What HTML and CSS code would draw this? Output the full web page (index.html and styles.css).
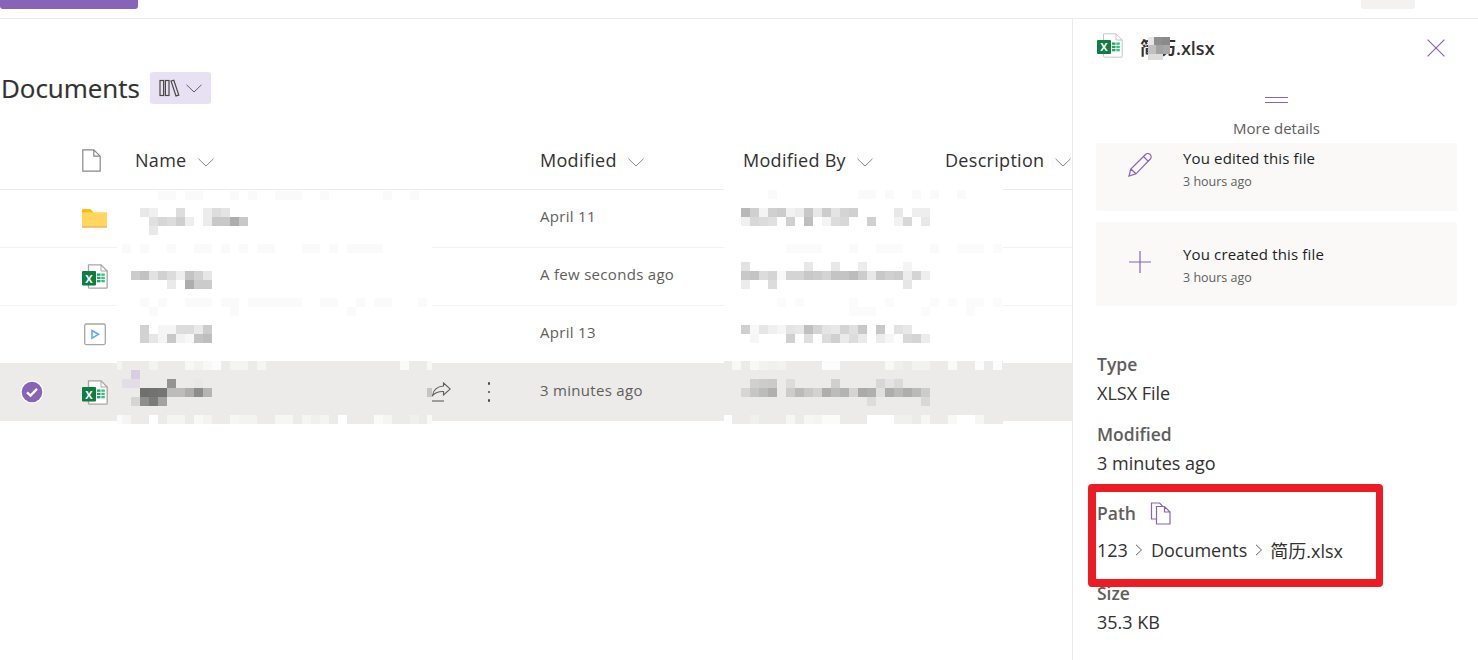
FILE: index.html
```html
<!DOCTYPE html>
<html lang="en">
<head>
  <meta charset="UTF-8">
  <title>Documents</title>
  <link rel="stylesheet" href="styles.css">
</head>
<body>
  <div class="topbar">
    <div class="new-btn"></div>
    <div class="top-pill"></div>
  </div>

  <div class="workspace">
    <main class="library">
      <div class="title-row">
        <h1>Documents</h1>
        <div class="view-chip">
          <svg width="21" height="18" viewBox="0 0 21 18" fill="none" stroke="#4a4846" stroke-width="1.2"><rect x="1" y="1.5" width="3.6" height="15"/><rect x="6.4" y="1.5" width="3.6" height="15"/><path d="M12 2l2.8-.8 5 14.8-2.8.9z"/></svg>
          <svg width="16" height="9" viewBox="0 0 16 9" fill="none" stroke="#605e5c"><path d="M.5.8L8 8l7.5-7.2"/></svg>
        </div>
      </div>

      <div class="table">
        <div class="row head">
          <div></div>
          <div class="cell-icon">
            <svg width="19" height="23" viewBox="0 0 19 23" fill="none" stroke="#8a8886" stroke-width="1.2"><path d="M.8.8h11l6.400 6.400v15h-17.400zM11.800 .8v6.400h6.400"/></svg>
          </div>
          <div class="col-title">Name <svg class="chev" width="16" height="9" viewBox="0 0 16 9" fill="none" stroke="#8a8886"><path d="M.5.8L8 8l7.5-7.2"/></svg></div>
          <div class="col-title">Modified <svg class="chev" width="16" height="9" viewBox="0 0 16 9" fill="none" stroke="#8a8886"><path d="M.5.8L8 8l7.5-7.2"/></svg></div>
          <div class="col-title">Modified By <svg class="chev" width="16" height="9" viewBox="0 0 16 9" fill="none" stroke="#8a8886"><path d="M.5.8L8 8l7.5-7.2"/></svg></div>
          <div class="col-title">Description <svg class="chev" width="16" height="9" viewBox="0 0 16 9" fill="none" stroke="#8a8886"><path d="M.5.8L8 8l7.5-7.2"/></svg></div>
        </div>

        <div class="row">
          <div></div>
          <div class="cell-icon">
            <svg class="folder" width="25" height="20" viewBox="0 0 26 20"><path d="M0 2a1 1 0 0 1 1-1h8l3 3h13a1 1 0 0 1 1 1v14H0z" fill="#ffd75e"/><path d="M0 2a1 1 0 0 1 1-1h7.5l3 3H0z" fill="#ffb900"/><rect y="18.800" width="26" height="1.200" fill="#e8a33d"/></svg>
          </div>
          <div></div>
          <div class="date">April 11</div>
          <div></div><div></div>
        </div>

        <div class="row">
          <div></div>
          <div class="cell-icon">
            <svg width="26" height="25" viewBox="0 0 26 25"><path d="M6.500 .8h12.500l6.200 6.200v16.200a1 1 0 0 1-1 1h-16.700a1 1 0 0 1-1-1z" fill="#fff" stroke="#a8a6a4" stroke-width="1.3"/><path d="M19 .8v6.200h6.200" fill="none" stroke="#a8a6a4"/><rect x="15" y="9.500" width="3.500" height="2.300" fill="#21a366"/><rect x="19.300" y="9.500" width="3.500" height="2.300" fill="#33c481"/><rect x="15" y="12.800" width="3.500" height="2.300" fill="#21a366"/><rect x="19.300" y="12.800" width="3.500" height="2.300" fill="#33c481"/><rect x="15" y="16" width="3.500" height="2.300" fill="#21a366"/><rect x="19.300" y="16" width="3.500" height="2.300" fill="#33c481"/><rect y="7" width="14" height="14.500" rx="1" fill="#107c41"/><text class="xl" x="7" y="18.500">X</text></svg>
          </div>
          <div></div>
          <div class="date">A few seconds ago</div>
          <div></div><div></div>
        </div>

        <div class="row">
          <div></div>
          <div class="cell-icon">
            <svg width="26" height="23" viewBox="0 0 26 23" fill="none"><rect x="2.700" y="1" width="20.600" height="20.600" rx="1.500" stroke="#a8a6a4" stroke-width="1.3"/><path d="M10 7.500l6.500 3.800-6.500 3.800z" stroke="#5aa9f0" stroke-width="1.5"/></svg>
          </div>
          <div></div>
          <div class="date">April 13</div>
          <div></div><div></div>
        </div>

        <div class="row is-selected">
          <div class="cell-check">
            <svg width="24" height="24" viewBox="0 0 24 24"><circle cx="12" cy="12" r="11.500" fill="#fff"/><circle cx="12" cy="12" r="10.300" fill="#8764b8"/><path d="M7 12.300l3.500 3.300 6.500-6.800" fill="none" stroke="#fff" stroke-width="2.4"/></svg>
          </div>
          <div class="cell-icon">
            <svg width="26" height="25" viewBox="0 0 26 25"><path d="M6.500 .8h12.500l6.200 6.200v16.200a1 1 0 0 1-1 1h-16.700a1 1 0 0 1-1-1z" fill="#fff" stroke="#a8a6a4" stroke-width="1.3"/><path d="M19 .8v6.200h6.200" fill="none" stroke="#a8a6a4"/><rect x="15" y="9.500" width="3.500" height="2.300" fill="#21a366"/><rect x="19.300" y="9.500" width="3.500" height="2.300" fill="#33c481"/><rect x="15" y="12.800" width="3.500" height="2.300" fill="#21a366"/><rect x="19.300" y="12.800" width="3.500" height="2.300" fill="#33c481"/><rect x="15" y="16" width="3.500" height="2.300" fill="#21a366"/><rect x="19.300" y="16" width="3.500" height="2.300" fill="#33c481"/><rect y="7" width="14" height="14.500" rx="1" fill="#107c41"/><text class="xl" x="7" y="18.500">X</text></svg>
          </div>
          <div class="name-actions">
            <svg width="21" height="20" viewBox="0 0 21 20" fill="none" stroke="#605e5c" stroke-width="1.1"><path d="M13.500 1l6.800 6-6.800 6v-3.500c-4.500-.2-8 .8-11 4 .8-5.500 5-9 11-9.500z"/><path d="M1 19h13"/></svg>
            <div class="dots"><span></span><span></span><span></span></div>
          </div>
          <div class="date">3 minutes ago</div>
          <div></div><div></div>
        </div>

        <!-- pixelated names -->
        <svg class="mosaic mosaic-name" width="315" height="234" viewBox="117 190 315 234">
          <rect x="117" y="247" width="315" height="1" fill="#fff"/>
          <rect x="117" y="305" width="315" height="1" fill="#fff"/>
          <rect x="117" y="361" width="315" height="63" fill="#ecebe9"/>
          <g class="cells">
            <rect x="158" y="191" fill="#fafafa"/><rect x="167" y="191" fill="#fafafa"/><rect x="185" y="191" fill="#fafafa"/><rect x="194" y="191" fill="#fafafa"/><rect x="230" y="191" fill="#fafafa"/><rect x="248" y="191" fill="#fafafa"/><rect x="275" y="191" fill="#fafafa"/><rect x="284" y="191" fill="#fafafa"/><rect x="293" y="191" fill="#fafafa"/><rect x="320" y="191" fill="#fafafa"/><rect x="383" y="191" fill="#fafafa"/><rect x="410" y="191" fill="#fafafa"/>
            <rect x="140" y="208" fill="#e8e8e8"/><rect x="149" y="208" fill="#f0f0f0"/><rect x="176" y="208" fill="#dddddd"/><rect x="203" y="208" fill="#ececec"/><rect x="212" y="208" fill="#dddddd"/><rect x="221" y="208" fill="#e4e4e4"/>
            <rect x="149" y="217" fill="#e0e0e0"/><rect x="158" y="217" fill="#d8d6d6"/><rect x="167" y="217" fill="#dcdcdc"/><rect x="176" y="217" fill="#cfcfcf"/><rect x="185" y="217" fill="#eeeeee"/><rect x="203" y="217" fill="#ececec"/><rect x="212" y="217" fill="#c8c8c8"/><rect x="221" y="217" fill="#c8c8c8"/><rect x="230" y="217" fill="#adadad"/><rect x="239" y="217" fill="#c8c8c8"/>
            <rect x="149" y="226" fill="#e8e8e8"/>
            <rect x="122" y="244" fill="#fafafa"/><rect x="140" y="244" fill="#fafafa"/><rect x="167" y="244" fill="#fafafa"/><rect x="194" y="244" fill="#fafafa"/><rect x="203" y="244" fill="#fafafa"/><rect x="221" y="244" fill="#fafafa"/><rect x="239" y="244" fill="#fafafa"/><rect x="257" y="244" fill="#fafafa"/><rect x="266" y="244" fill="#fafafa"/><rect x="302" y="244" fill="#fafafa"/><rect x="311" y="244" fill="#fafafa"/><rect x="329" y="244" fill="#fafafa"/><rect x="347" y="244" fill="#fafafa"/><rect x="356" y="244" fill="#fafafa"/><rect x="365" y="244" fill="#fafafa"/><rect x="374" y="244" fill="#fafafa"/>
            <rect x="131" y="271" fill="#cccccc"/><rect x="140" y="271" fill="#c2c2c0"/><rect x="149" y="271" fill="#e2e2e2"/><rect x="158" y="271" fill="#d2d0d0"/><rect x="167" y="271" fill="#dcdcdc"/><rect x="176" y="271" fill="#eeeeee"/><rect x="185" y="271" fill="#c4c4c4"/><rect x="194" y="271" fill="#d2d2d2"/><rect x="203" y="271" fill="#e6e6e4"/>
            <rect x="167" y="280" fill="#eaeaea"/><rect x="185" y="280" fill="#adadab"/><rect x="194" y="280" fill="#cbcbcb"/><rect x="203" y="280" fill="#cbcbcb"/>
            <rect x="140" y="298" fill="#fafafa"/><rect x="158" y="298" fill="#fafafa"/><rect x="185" y="298" fill="#fafafa"/><rect x="194" y="298" fill="#fafafa"/><rect x="203" y="298" fill="#fafafa"/><rect x="221" y="298" fill="#fafafa"/><rect x="230" y="298" fill="#fafafa"/><rect x="248" y="298" fill="#fafafa"/><rect x="257" y="298" fill="#fafafa"/><rect x="266" y="298" fill="#fafafa"/><rect x="275" y="298" fill="#fafafa"/><rect x="284" y="298" fill="#fafafa"/><rect x="293" y="298" fill="#fafafa"/><rect x="320" y="298" fill="#fafafa"/><rect x="329" y="298" fill="#fafafa"/><rect x="356" y="298" fill="#fafafa"/><rect x="374" y="298" fill="#fafafa"/><rect x="383" y="298" fill="#fafafa"/><rect x="418" y="298" fill="#fafafa"/>
            <rect x="149" y="307" fill="#fafafa"/><rect x="230" y="307" fill="#fafafa"/><rect x="347" y="307" fill="#fafafa"/>
            <rect x="140" y="325" fill="#d2d2d2"/><rect x="158" y="325" fill="#f5f5f5"/><rect x="167" y="325" fill="#f5f5f5"/><rect x="176" y="325" fill="#dcdcdc"/><rect x="185" y="325" fill="#dcdcdc"/><rect x="194" y="325" fill="#eaeaea"/><rect x="203" y="325" fill="#cccccc"/>
            <rect x="140" y="334" fill="#d2d2d2"/><rect x="149" y="334" fill="#e6e6e6"/><rect x="158" y="334" fill="#f4f4f4"/><rect x="167" y="334" fill="#c8c8c8"/><rect x="176" y="334" fill="#f2f2f2"/><rect x="185" y="334" fill="#f8f8f8"/><rect x="194" y="334" fill="#c4c4c4"/><rect x="203" y="334" fill="#bebebe"/>
            <rect x="149" y="361" fill="#f3f3f2"/><rect x="185" y="361" fill="#f7f7f6"/><rect x="194" y="361" fill="#f2f2f1"/><rect x="203" y="361" fill="#f8f8f7"/><rect x="212" y="361" fill="#fcfcfc"/><rect x="230" y="361" fill="#f4f4f3"/><rect x="239" y="361" fill="#f4f4f3"/><rect x="257" y="361" fill="#f5f5f4"/><rect x="400" y="361" fill="#fafaf9"/>
            <rect x="131" y="370" fill="#d8cde2"/>
            <rect x="122" y="379" fill="#e2dde6"/><rect x="131" y="379" fill="#e2dde6"/><rect x="167" y="379" fill="#949492"/><rect x="194" y="379" fill="#e8e8e6"/>
            <rect x="140" y="388" fill="#6f6f6d"/><rect x="149" y="388" fill="#727270"/><rect x="158" y="388" fill="#757573"/><rect x="167" y="388" fill="#bcbcba"/><rect x="176" y="388" fill="#bcbcba"/><rect x="185" y="388" fill="#adadab"/><rect x="194" y="388" fill="#8d8d8b"/><rect x="203" y="388" fill="#b5b5b3"/>
            <rect x="131" y="397" fill="#d5d5d3"/><rect x="140" y="397" fill="#8e8e8c"/><rect x="149" y="397" fill="#7b7b79"/><rect x="158" y="397" fill="#a2a2a0"/>
            <rect x="122" y="415" fill="#f5f5f4"/><rect x="149" y="415" fill="#ffffff"/><rect x="167" y="415" fill="#f4f4f3"/><rect x="176" y="415" fill="#f4f4f3"/><rect x="194" y="415" fill="#f8f8f7"/><rect x="203" y="415" fill="#f3f3f2"/><rect x="230" y="415" fill="#f6f6f5"/><rect x="239" y="415" fill="#f3f3f2"/><rect x="248" y="415" fill="#f3f3f2"/><rect x="275" y="415" fill="#f6f6f5"/><rect x="284" y="415" fill="#f6f6f5"/><rect x="302" y="415" fill="#f5f5f4"/><rect x="311" y="415" fill="#f0f0ef"/><rect x="320" y="415" fill="#f4f4f3"/><rect x="338" y="415" fill="#ffffff"/><rect x="374" y="415" fill="#fafaf9"/><rect x="383" y="415" fill="#f5f5f4"/><rect x="410" y="415" fill="#efefee"/>
          </g>
          <rect x="117" y="361" width="5" height="9" fill="#f4f4f3"/>
          <rect x="427" y="361" width="5" height="9" fill="#f7f7f6"/>
          <rect x="117" y="415" width="5" height="9" fill="#fbfbfb"/>
          <rect x="427" y="415" width="5" height="9" fill="#f9f9f8"/>
          <rect x="427" y="388" width="5" height="9" fill="#c5c5c3"/>
        </svg>

        <!-- pixelated people -->
        <svg class="mosaic mosaic-by" width="279" height="236" viewBox="724 188 279 236">
          <rect x="724" y="188" width="279" height="3" fill="#fff"/>
          <rect x="724" y="247" width="279" height="1" fill="#fff"/>
          <rect x="724" y="305" width="279" height="1" fill="#fff"/>
          <rect x="724" y="361" width="279" height="63" fill="#ecebe9"/>
          <g class="cells">
            <rect x="768" y="190" fill="#fafafa"/><rect x="858" y="190" fill="#fafafa"/><rect x="867" y="190" fill="#fafafa"/><rect x="885" y="190" fill="#fafafa"/><rect x="912" y="190" fill="#fafafa"/><rect x="930" y="190" fill="#fafafa"/><rect x="957" y="190" fill="#fafafa"/>
            <rect x="741" y="208" fill="#b8b8b8"/><rect x="750" y="208" fill="#d0d0d0"/><rect x="759" y="208" fill="#f4f4f4"/><rect x="768" y="208" fill="#d0d0d0"/><rect x="777" y="208" fill="#cccccc"/><rect x="786" y="208" fill="#f2f2f2"/><rect x="795" y="208" fill="#ececec"/><rect x="804" y="208" fill="#c8c8c8"/><rect x="813" y="208" fill="#e8e8e8"/><rect x="822" y="208" fill="#cccccc"/><rect x="831" y="208" fill="#e4e4e4"/><rect x="840" y="208" fill="#d4d4d4"/><rect x="849" y="208" fill="#d0d0d0"/><rect x="894" y="208" fill="#e8e8e8"/><rect x="912" y="208" fill="#eeeeee"/><rect x="921" y="208" fill="#eeeeee"/>
            <rect x="741" y="217" fill="#f0f0f0"/><rect x="750" y="217" fill="#d8d8d8"/><rect x="759" y="217" fill="#dcdcdc"/><rect x="768" y="217" fill="#e0e0e0"/><rect x="786" y="217" fill="#d0d0d0"/><rect x="804" y="217" fill="#bebebe"/><rect x="822" y="217" fill="#f4f4f4"/><rect x="831" y="217" fill="#dcdcdc"/><rect x="840" y="217" fill="#d8d8d8"/><rect x="867" y="217" fill="#d0d0d0"/><rect x="894" y="217" fill="#f2f2f2"/><rect x="903" y="217" fill="#d8d8d8"/><rect x="921" y="217" fill="#e8e8e8"/>
            <rect x="786" y="244" fill="#fbfbfb"/><rect x="795" y="244" fill="#fbfbfb"/><rect x="804" y="244" fill="#fbfbfb"/><rect x="813" y="244" fill="#fbfbfb"/><rect x="849" y="244" fill="#fafafa"/><rect x="876" y="244" fill="#fbfbfb"/><rect x="885" y="244" fill="#fbfbfb"/><rect x="894" y="244" fill="#fbfbfb"/><rect x="930" y="244" fill="#fafafa"/><rect x="957" y="244" fill="#fbfbfb"/><rect x="966" y="244" fill="#fbfbfb"/><rect x="975" y="244" fill="#fbfbfb"/><rect x="993" y="244" fill="#fbfbfb"/>
            <rect x="741" y="262" fill="#e2e2e2"/><rect x="804" y="262" fill="#e8e8e8"/><rect x="831" y="262" fill="#e8e8e8"/><rect x="858" y="262" fill="#ececec"/><rect x="903" y="262" fill="#f4f4f4"/>
            <rect x="741" y="271" fill="#c8c8c8"/><rect x="750" y="271" fill="#c4c4c4"/><rect x="759" y="271" fill="#dcdcdc"/><rect x="768" y="271" fill="#d4d4d4"/><rect x="777" y="271" fill="#f8f8f8"/><rect x="786" y="271" fill="#d4d4d4"/><rect x="795" y="271" fill="#d4d4d4"/><rect x="804" y="271" fill="#c8c8c8"/><rect x="813" y="271" fill="#cccccc"/><rect x="822" y="271" fill="#d4d4d4"/><rect x="831" y="271" fill="#c4c4c4"/><rect x="840" y="271" fill="#c4c4c4"/><rect x="849" y="271" fill="#bcbcbc"/><rect x="858" y="271" fill="#cccccc"/><rect x="867" y="271" fill="#e8e8e8"/><rect x="876" y="271" fill="#c8c8c8"/><rect x="885" y="271" fill="#d0d0d0"/><rect x="894" y="271" fill="#cccccc"/><rect x="903" y="271" fill="#ececec"/><rect x="912" y="271" fill="#d4d4d4"/><rect x="921" y="271" fill="#eeeeee"/>
            <rect x="741" y="280" fill="#ececec"/><rect x="768" y="280" fill="#dcdcdc"/><rect x="903" y="280" fill="#e6e6e6"/>
            <rect x="777" y="298" fill="#fbfbfb"/><rect x="795" y="298" fill="#fbfbfb"/><rect x="849" y="298" fill="#fbfbfb"/><rect x="885" y="298" fill="#fbfbfb"/><rect x="930" y="298" fill="#fbfbfb"/><rect x="948" y="298" fill="#fbfbfb"/><rect x="966" y="298" fill="#fbfbfb"/><rect x="975" y="298" fill="#fbfbfb"/><rect x="993" y="298" fill="#fbfbfb"/>
            <rect x="849" y="307" fill="#fbfbfb"/><rect x="858" y="307" fill="#fbfbfb"/><rect x="867" y="307" fill="#fbfbfb"/><rect x="921" y="307" fill="#fbfbfb"/><rect x="966" y="307" fill="#fbfbfb"/>
            <rect x="741" y="325" fill="#d0d0d0"/><rect x="750" y="325" fill="#f8f8f8"/><rect x="759" y="325" fill="#e6e6e6"/><rect x="768" y="325" fill="#f0f0f0"/><rect x="777" y="325" fill="#f6f6f6"/><rect x="786" y="325" fill="#e4e4e4"/><rect x="795" y="325" fill="#e8e8e8"/><rect x="804" y="325" fill="#c0c0c0"/><rect x="813" y="325" fill="#d4d4d4"/><rect x="822" y="325" fill="#e4e4e4"/><rect x="831" y="325" fill="#e8e8e8"/><rect x="840" y="325" fill="#d4d4d4"/><rect x="849" y="325" fill="#e0e0e0"/><rect x="858" y="325" fill="#c8c8c8"/><rect x="876" y="325" fill="#c8c8c8"/><rect x="894" y="325" fill="#e2e2e2"/><rect x="903" y="325" fill="#e8e8e8"/>
            <rect x="750" y="334" fill="#f6f6f6"/><rect x="786" y="334" fill="#d0d0d0"/><rect x="804" y="334" fill="#e0e0e0"/><rect x="822" y="334" fill="#dcdcdc"/><rect x="831" y="334" fill="#d0d0d0"/><rect x="840" y="334" fill="#eaeaea"/><rect x="849" y="334" fill="#dcdcdc"/><rect x="858" y="334" fill="#eaeaea"/><rect x="876" y="334" fill="#ececec"/><rect x="885" y="334" fill="#f6f6f6"/><rect x="903" y="334" fill="#d8d8d8"/><rect x="912" y="334" fill="#d4d4d4"/><rect x="921" y="334" fill="#ececec"/>
            <rect x="732" y="361" fill="#f8f8f7"/><rect x="750" y="361" fill="#f8f8f7"/><rect x="759" y="361" fill="#f2f2f1"/><rect x="768" y="361" fill="#f0f0ef"/><rect x="777" y="361" fill="#f2f2f1"/><rect x="822" y="361" fill="#fcfcfc"/><rect x="831" y="361" fill="#fcfcfc"/><rect x="885" y="361" fill="#f8f8f7"/><rect x="894" y="361" fill="#efefee"/><rect x="912" y="361" fill="#f2f2f1"/><rect x="921" y="361" fill="#f2f2f1"/><rect x="948" y="361" fill="#fafaf9"/><rect x="975" y="361" fill="#fcfcfc"/><rect x="993" y="361" fill="#fcfcfc"/>
            <rect x="750" y="379" fill="#d0d0ce"/><rect x="759" y="379" fill="#ccccca"/><rect x="768" y="379" fill="#cacac8"/><rect x="786" y="379" fill="#dcdcda"/><rect x="831" y="379" fill="#d0d0ce"/><rect x="876" y="379" fill="#d8d6d8"/><rect x="885" y="379" fill="#e4e4e4"/><rect x="894" y="379" fill="#dadad8"/>
            <rect x="741" y="388" fill="#d6d6d4"/><rect x="750" y="388" fill="#c6c6c4"/><rect x="759" y="388" fill="#bcbcba"/><rect x="768" y="388" fill="#b0b0ae"/><rect x="786" y="388" fill="#ccccca"/><rect x="795" y="388" fill="#bababa"/><rect x="804" y="388" fill="#c8c8c6"/><rect x="813" y="388" fill="#d2d2d0"/><rect x="822" y="388" fill="#aeaeac"/><rect x="831" y="388" fill="#bcbcba"/><rect x="840" y="388" fill="#b4b4b2"/><rect x="849" y="388" fill="#d4d4d2"/><rect x="858" y="388" fill="#aaaaa8"/><rect x="867" y="388" fill="#b0b0ae"/><rect x="876" y="388" fill="#e0e0e0"/><rect x="885" y="388" fill="#aeaeac"/><rect x="894" y="388" fill="#bababa"/><rect x="903" y="388" fill="#aeaeac"/><rect x="912" y="388" fill="#bababa"/><rect x="921" y="388" fill="#ccccca"/>
            <rect x="867" y="397" fill="#dcdcda"/><rect x="921" y="397" fill="#d8d8d6"/>
            <rect x="750" y="415" fill="#f0f0ef"/><rect x="786" y="415" fill="#f6f6f5"/><rect x="804" y="415" fill="#f6f6f5"/><rect x="813" y="415" fill="#f4f4f3"/><rect x="822" y="415" fill="#fbfbfa"/><rect x="831" y="415" fill="#fbfbfa"/><rect x="867" y="415" fill="#ffffff"/><rect x="876" y="415" fill="#ffffff"/><rect x="885" y="415" fill="#ffffff"/><rect x="894" y="415" fill="#f0f0ef"/><rect x="903" y="415" fill="#f0f0ef"/><rect x="921" y="415" fill="#f6f6f5"/><rect x="948" y="415" fill="#f8f8f7"/><rect x="957" y="415" fill="#ffffff"/><rect x="966" y="415" fill="#ffffff"/><rect x="975" y="415" fill="#f6f6f5"/>
          </g>
          <rect x="724" y="415" width="8" height="9" fill="#fdfdfd"/>
        </svg>
      </div>
    </main>

    <aside class="details">
      <div class="details-head">
        <svg class="head-icon" width="26" height="25" viewBox="0 0 26 25"><path d="M6.500 .8h12.500l6.200 6.200v16.200a1 1 0 0 1-1 1h-16.700a1 1 0 0 1-1-1z" fill="#fff" stroke="#c8c6c4"/><path d="M19 .8v6.200h6.200" fill="none" stroke="#c8c6c4"/><rect x="15" y="9.500" width="3.500" height="2.300" fill="#21a366"/><rect x="19.300" y="9.500" width="3.500" height="2.300" fill="#33c481"/><rect x="15" y="12.800" width="3.500" height="2.300" fill="#21a366"/><rect x="19.300" y="12.800" width="3.500" height="2.300" fill="#33c481"/><rect x="15" y="16" width="3.500" height="2.300" fill="#21a366"/><rect x="19.300" y="16" width="3.500" height="2.300" fill="#33c481"/><rect y="7" width="14" height="14" rx="1" fill="#107c41"/><text class="xl" x="7" y="18">X</text></svg>
        <div class="file-title">简历.xlsx
          <svg class="title-blur" width="22" height="23" viewBox="0 0 22 23"><rect width="6" height="8" fill="#e6e6e6"/><rect x="6" width="8" height="8" fill="#8e8e8e"/><rect x="14" width="8" height="8" fill="#8a8a8a"/><rect y="8" width="8" height="9" fill="#c0c0c0"/><rect x="8" y="8" width="7" height="9" fill="#a2a2a2"/><rect x="15" y="8" width="7" height="9" fill="#a8a8a8"/><rect y="17" width="15" height="6" fill="#dcdcdc"/></svg>
        </div>
        <svg class="close" width="18" height="18" viewBox="0 0 18 18" stroke="#8764b8" stroke-width="1.2"><path d="M.6.6l16.800 16.800M17.400.6L.6 17.400"/></svg>
      </div>

      <div class="more">
        <div class="handle"></div>
        <div class="more-label">More details</div>
      </div>

      <div class="card card-cut">
        <svg class="card-icon" width="24" height="24" viewBox="0 0 24 24" fill="none" stroke="#8764b8" stroke-width="1.2"><path d="M1 23l1.800-7L17.500 1.500a3 3 0 0 1 4.500 0 3 3 0 0 1 .3 4.500L8 20.800zM2.800 16L8 20.800M15.500 3.500l4.800 4.800"/></svg>
        <div>
          <div class="card-title">You edited this file</div>
          <div class="card-time">3 hours ago</div>
        </div>
      </div>
      <div class="card">
        <svg class="card-icon" width="24" height="24" viewBox="0 0 24 24" fill="none" stroke="#8764b8" stroke-width="1.2"><path d="M12 1v22M1 12h22"/></svg>
        <div>
          <div class="card-title">You created this file</div>
          <div class="card-time">3 hours ago</div>
        </div>
      </div>

      <div class="field field-type">
        <div class="field-label">Type</div>
        <div class="field-value">XLSX File</div>
      </div>
      <div class="field">
        <div class="field-label">Modified</div>
        <div class="field-value">3 minutes ago</div>
      </div>
      <div class="field field-path">
        <div class="field-label">Path
          <svg width="22" height="23" viewBox="0 0 22 23" fill="none" stroke="#8764b8" stroke-width="1.2"><path d="M6.500 17H1.500V1h8l3 3"/><path d="M6.500 4.500h8l5.500 5.500v12H6.500zM14.500 4.500V10H20"/></svg>
        </div>
        <div class="path-line">
          <span>123</span>
          <svg width="8" height="12" viewBox="0 0 8 12" fill="none" stroke="#605e5c"><path d="M1 .8L6.500 6 1 11.200"/></svg>
          <span>Documents</span>
          <svg width="8" height="12" viewBox="0 0 8 12" fill="none" stroke="#605e5c"><path d="M1 .8L6.500 6 1 11.200"/></svg>
          <span>简历.xlsx</span>
        </div>
        <div class="redbox"></div>
      </div>
      <div class="field field-size">
        <div class="field-label">Size</div>
        <div class="field-value">35.3 KB</div>
      </div>
    </aside>
  </div>
</body>
</html>
```

FILE: styles.css
```css
html, body {
  margin: 0;
  height: 100%;
  overflow: hidden;
}

body {
  background: #fff;
  color: #323130;
  font-family: "Open Sans", "Noto Sans CJK SC", sans-serif;
}

/* Top bar */
.topbar {
  height: 18px;
  border-bottom: 1px solid #edebe9;
  display: flex;
  justify-content: space-between;
}
.new-btn {
  width: 138px;
  height: 9px;
  background: #8764b8;
  border-radius: 0 0 3px 3px;
}
.top-pill {
  width: 54px;
  height: 9px;
  margin-right: 63px;
  background: #f3f2f1;
  border-radius: 0 0 3px 3px;
}

.workspace {
  display: flex;
  height: 641px;
}

/* Library */
.library {
  width: 1072px;
  flex: none;
}
.title-row {
  display: flex;
  align-items: center;
  gap: 10px;
  height: 32px;
  padding: 53px 0 28px 1px;
}
h1 {
  margin: 0;
  font-size: 26px;
  font-weight: 400;
  letter-spacing: -0.05px;
  color: #323130;
  -webkit-text-stroke: 0.2px #323130;
}
.view-chip {
  width: 61px;
  height: 32px;
  display: flex;
  align-items: center;
  justify-content: center;
  gap: 6px;
  background: #e8e1f3;
  border-radius: 3px;
}

.table {
  position: relative;
}
.row {
  display: grid;
  grid-template-columns: 81px 54px 405px 203px 202px 1fr;
  align-items: center;
  height: 58px;
  box-sizing: border-box;
  border-bottom: 1px solid #f3f2f1;
}
.row.head {
  border-bottom-color: #edebe9;
}
.row.is-selected {
  background: #ecebe9;
  border-bottom: 0;
  margin-top: -1px;
}
.cell-icon {
  display: flex;
  align-items: center;
  padding-left: 1px;
}
.folder {
  margin-top: -2px;
}
.cell-check {
  display: flex;
  justify-content: flex-start;
  padding-left: 20px;
}
.col-title {
  padding-bottom: 2px;
  font-size: 18px;
  letter-spacing: 0.3px;
  white-space: nowrap;
  color: #323130;
}
.chev {
  margin-left: 6px;
}
.date {
  padding-bottom: 6px;
  font-size: 15px;
  letter-spacing: 0.3px;
  color: #605e5c;
}
.is-selected .date {
  padding-bottom: 4px;
}
.name-actions {
  display: flex;
  align-items: center;
  justify-content: flex-end;
  gap: 37px;
  padding-right: 50px;
}
.dots {
  display: flex;
  flex-direction: column;
  gap: 6px;
}
.dots span {
  width: 2.5px;
  height: 2.5px;
  border-radius: 50%;
  background: #4a4846;
}
.xl {
  font: 700 11px "Open Sans", sans-serif;
  fill: #fff;
  text-anchor: middle;
}

/* Pixelated overlays */
.mosaic {
  position: absolute;
}
.mosaic-name {
  left: 117px;
  top: 58px;
}
.mosaic-by {
  left: 724px;
  top: 56px;
}
.cells rect {
  width: 9px;
  height: 9px;
}

/* Details pane */
.details {
  width: 405px;
  flex: none;
  box-sizing: border-box;
  border-left: 1px solid #edebe9;
  padding-left: 23px;
  height: 641px;
  overflow: hidden;
}
.details-head {
  display: flex;
  align-items: center;
  height: 26px;
  padding-top: 15px;
}
.head-icon {
  margin: -4px 0 0 1px;
}
.file-title {
  position: relative;
  margin-left: 17px;
  font-size: 18px;
  font-weight: 600;
  white-space: nowrap;
}
.title-blur {
  position: absolute;
  left: 8px;
  top: 3px;
}
.close {
  margin-left: auto;
  margin-right: 32px;
  margin-top: 1px;
}
.more {
  width: 361px;
  text-align: center;
  padding-top: 37px;
}
.handle {
  width: 23px;
  height: 2px;
  margin: 0 auto;
  border-top: 1px solid #8764b8;
  border-bottom: 1px solid #8764b8;
  padding: 1px 0;
}
.more-label {
  margin-top: 15px;
  font-size: 15px;
  line-height: 20px;
  color: #605e5c;
}
.card {
  width: 361px;
  height: 84px;
  box-sizing: border-box;
  margin-top: 11px;
  padding: 21px 0 0 32px;
  display: flex;
  align-items: flex-start;
  gap: 31px;
  background: #faf9f8;
  border-radius: 2px;
}
.card-icon {
  margin-top: 7px;
}
.card-cut {
  height: 68px;
  margin-top: 5px;
  padding-top: 4px;
}
.card-cut .card-icon {
  margin-top: 6px;
}
.card-title {
  font-size: 15px;
  letter-spacing: 0.15px;
  line-height: 22px;
  color: #201f1e;
}
.card-time {
  font-size: 12.5px;
  line-height: 26px;
  color: #605e5c;
}

.field {
  margin-top: 12px;
  padding-left: 1px;
}
.field-label {
  display: flex;
  align-items: center;
  gap: 14px;
  font-size: 17.5px;
  font-weight: 600;
  line-height: 29px;
  color: #605e5c;
}
.field-value {
  font-size: 18px;
  line-height: 29px;
  color: #323130;
}
.field-type {
  margin-top: 44px;
}
.field-path {
  position: relative;
  margin-top: 21px;
}
.path-line {
  display: flex;
  align-items: center;
  gap: 7.5px;
  margin-top: 7px;
  height: 29px;
  font-size: 18px;
}
.field-size {
  margin-top: 15px;
}
.redbox {
  position: absolute;
  left: -8px;
  top: -15px;
  width: 295px;
  height: 103px;
  box-sizing: border-box;
  border: 8px solid #ed1c24;
  border-right-width: 7px;
  border-radius: 4px;
  z-index: 2;
}
```
